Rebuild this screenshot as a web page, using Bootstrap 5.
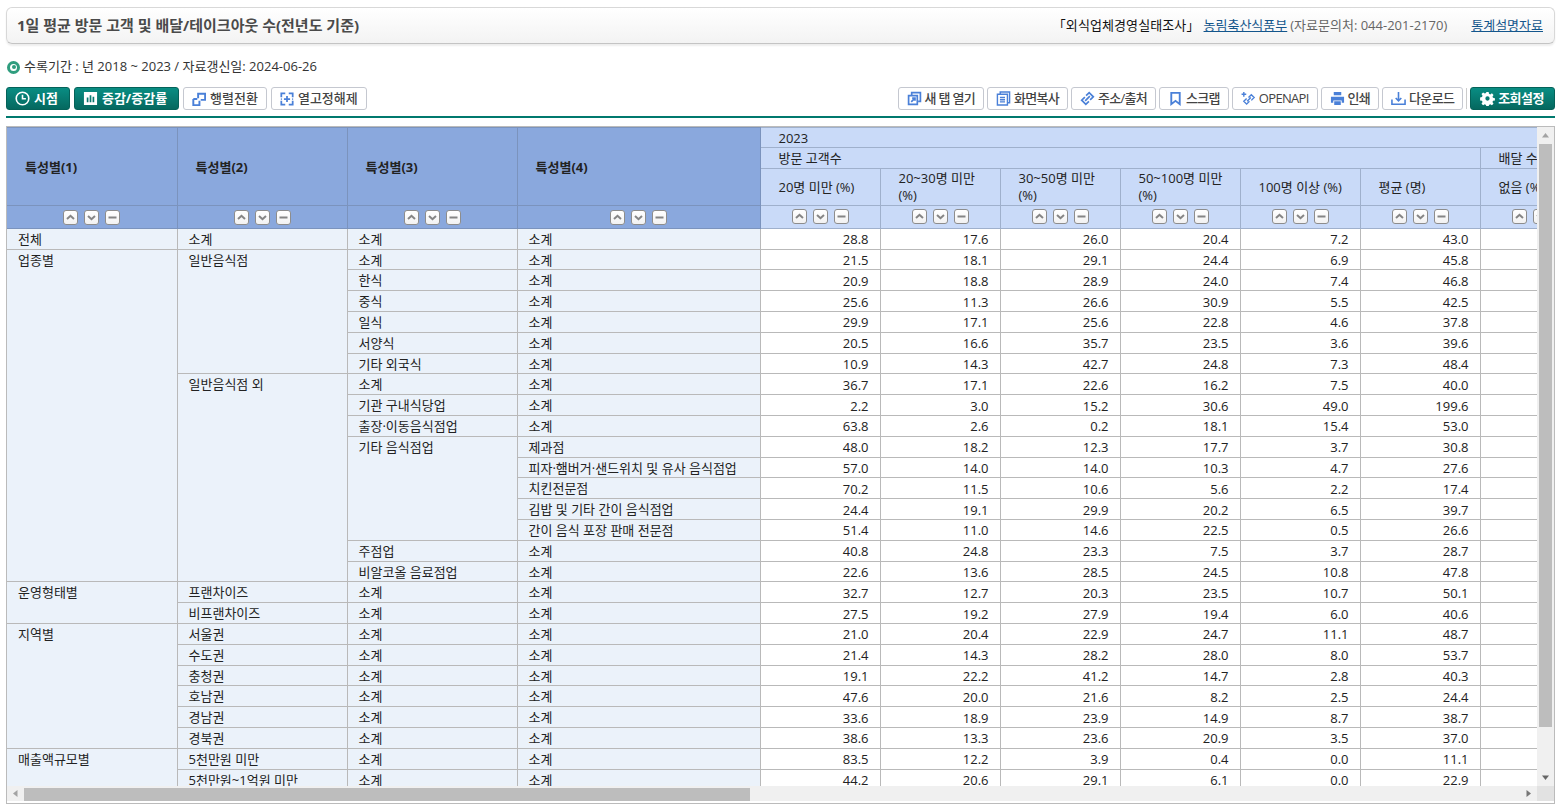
<!DOCTYPE html>
<html lang="ko">
<head>
<meta charset="utf-8">
<title>1일 평균 방문 고객 및 배달/테이크아웃 수</title>
<link href="https://cdn.jsdelivr.net/npm/bootstrap@5.3.0/dist/css/bootstrap.min.css" rel="stylesheet">
<style>
html,body{height:811px;overflow:hidden;background:#fff}
body{font-family:"Open Sans","Noto Sans CJK KR",sans-serif;font-size:13px;color:#333;padding:7px 8px 0 6px}
.title-panel{height:37px;border:1px solid #d8d8d8;border-bottom-color:#c4c4c4;border-radius:6px;background:linear-gradient(#fff,#f3f3f3);box-shadow:0 2px 2px #eee;padding:0 11px 0 10px}
.title-text{font-size:15px;font-weight:700;color:#4a4a4a;margin:0 0 1px}
.src-name{color:#111;font-size:13px;letter-spacing:.1px}
.src-link{color:#14568c}
.src-note{color:#666;font-size:13px}
.period{height:22px;margin-top:12px;color:#333}
.dot{width:13px;height:13px;border-radius:50%;border:3px solid #2f9d7e;background:#fff;position:relative;margin:0 4px 0 1px}
.dot::after{content:"";position:absolute;inset:1.5px;border-radius:50%;background:#2f9d7e}
.bar{margin-top:9px;height:31px;border-bottom:2px solid #00796e;padding-bottom:6px}
.tbtn{height:23px;padding:0 8px;font-size:13px;line-height:21px;border:1px solid #c5c8d0;border-radius:3px;background:#fff;color:#444;font-weight:500;display:flex;align-items:center;gap:4px;white-space:nowrap}
.tbtn svg{width:14px;height:14px;flex:none;color:#4a80d8}
.tbtn.on{background:linear-gradient(#098d83,#05685f);border-color:#056259;color:#fff;font-weight:700;padding:0 11px 0 8px}
.tbtn.on svg{color:#fff;width:15px;height:15px}
.rgroup{gap:3px}
.rgroup .tbtn{letter-spacing:-.7px;gap:3px}
.rgroup .tbtn svg{width:15px;height:15px}
.rgroup .tbtn.on{letter-spacing:-.5px;padding:0 10px 0 9px;gap:3px}
.vsep{width:1px;height:21px;background:#ccc}
.grid-frame{margin-top:8px;height:678px;border:1px solid #bbb;padding-bottom:2px}
.grid-body{height:659px}
.view{overflow:hidden}
.stat-grid.table{width:1713px;table-layout:fixed;border-collapse:collapse;margin:0;--bs-table-bg:#fff;color:#222}
.stat-grid.table>:not(caption)>*>*{padding:1px 12px 0 11px;height:20.8px;line-height:18px;border:1px solid #b9b9b9;font-size:13px;font-weight:400;vertical-align:middle;box-shadow:none;white-space:nowrap;overflow:hidden}
.stat-grid.table>:first-child>*:first-child>*{border-top:0}
.stat-grid.table>*>*>*:first-child{border-left:0}
.stat-grid.table>tbody>tr>th{background:#ebf2fa;text-align:left;vertical-align:top;color:#222;padding-top:2px;line-height:17px}
.stat-grid.table>tbody>tr>td{text-align:right;background:#fff;padding:2px 11px 0 0;line-height:17px}
.stat-grid.table>thead>tr>.dim{background:#8aa8dd;border-color:#7b93bd;font-weight:700;padding-left:18px;color:#222}
.stat-grid.table>thead>tr>.hd{background:#c9daf8;border-color:#9fb0cc;padding-left:18px;color:#222;white-space:normal;line-height:17px}
.stat-grid.table>thead>tr>.sorts{padding:0;text-align:center}
.stat-grid.table>thead>tr.r-year>*{height:20px}
.stat-grid.table>thead>tr.r-col>*{height:37px}
.stat-grid.table>thead>tr.r-sort>*{height:23px}
.sorts span{display:inline-block;width:15px;height:15px;border:1px solid #8d8d8d;border-radius:3px;background:linear-gradient(#fff,#f2f2f2);margin:0 3px;vertical-align:middle;position:relative;top:-1px}
.sorts svg{display:block;width:13px;height:13px;color:#858585}
.vbar{width:17px;background:#f0f0f0;color:#a3a3a3}
.vthumb{width:13px;margin:0 2px;background:#bdbdbd}
.hbar{height:15px;background:#f0f0f0;color:#777}
.hthumb{width:726px;height:13px;margin-top:2px;background:#bdbdbd}
.corner{width:17px;background:#e2e2e2}
.arr{flex:none;display:block}
</style>
</head>
<body>
<svg width="0" height="0" class="position-absolute">
<symbol id="up" viewBox="0 0 13 13"><path d="M3 8 6.500 4.800 10 8" fill="none" stroke="currentColor" stroke-width="2"/></symbol>
<symbol id="dn" viewBox="0 0 13 13"><path d="M3 5 6.500 8.200 10 5" fill="none" stroke="currentColor" stroke-width="2"/></symbol>
<symbol id="mn" viewBox="0 0 13 13"><path d="M2.500 6.500h8" fill="none" stroke="currentColor" stroke-width="2"/></symbol>
</svg>

<header class="title-panel d-flex align-items-center justify-content-between">
  <h1 class="title-text">1일 평균 방문 고객 및 배달/테이크아웃 수(전년도 기준)</h1>
  <div class="d-flex align-items-center">
    <span class="src-name">「외식업체경영실태조사」</span>
    <a href="#" class="src-link ms-1">농림축산식품부 </a>
    <span class="src-note" style="margin-left:3px">(자료문의처: 044-201-2170)</span>
    <a href="#" class="src-link" style="margin-left:24px">통계설명자료</a>
  </div>
</header>

<div class="period d-flex align-items-center"><i class="dot"></i><span>수록기간 : 년 2018 ~ 2023 / 자료갱신일: 2024-06-26</span></div>

<div class="bar d-flex justify-content-between">
  <div class="d-flex gap-1">
    <button class="tbtn on"><svg viewBox="0 0 16 16"><circle cx="8" cy="8" r="6.700" fill="none" stroke="currentColor" stroke-width="1.700"/><path d="M8 4v4.300h3.600" fill="none" stroke="currentColor" stroke-width="1.700"/></svg> 시점</button>
    <button class="tbtn on"><svg viewBox="0 0 16 16"><path fill="currentColor" fill-rule="evenodd" d="M1 1h14v14H1zM4 7v5h1.800V7zm3.100-2.500V12h1.800V4.500zM10.200 6v6H12V6z"/></svg> 증감/증감률</button>
    <button class="tbtn"><svg viewBox="0 0 16 16"><path fill="none" stroke="currentColor" stroke-width="2.200" d="M7 7V2h8v7h-5M1.500 8v7h7v-5M1.500 8H6"/></svg> 행렬전환</button>
    <button class="tbtn"><svg viewBox="0 0 16 16"><path fill="none" stroke="currentColor" stroke-width="2" d="M6 1.500H1.500V6M10 1.500h4.500V6M6 14.500H1.500V10M10 14.500h4.500V10M1 8h1M14 8h1M8 4.500v7M4.500 8h7"/></svg> 열고정해제</button>
  </div>
  <div class="d-flex rgroup align-items-center">
    <button class="tbtn"><svg viewBox="0 0 16 16"><path fill="none" stroke="currentColor" stroke-width="1.800" d="M5 4V1.700h9.300V11H12M1.700 5h9.300v9.300H1.700zM4.500 11.500 8.500 7.500M5.500 7.500h3v3"/></svg> 새 탭 열기</button>
    <button class="tbtn"><svg viewBox="0 0 16 16"><path fill="none" stroke="currentColor" stroke-width="1.500" d="M4.500 3.200V1h10v11.500h-2.300M1.500 3.500h10.700V15H1.500zM4.200 7h5.400M4.200 9.300h5.400M4.200 11.600h5.400"/></svg> 화면복사</button>
    <button class="tbtn"><svg viewBox="0 0 16 16"><path fill="none" stroke="currentColor" stroke-width="1.800" d="M6.500 5 9.800 1.800l4.400 4.400-3.400 3.300M9.500 11 6.200 14.200 1.800 9.800l3.400-3.300M5.500 10.500l5-5"/></svg> 주소/출처</button>
    <button class="tbtn"><svg viewBox="0 0 16 16"><path fill="none" stroke="currentColor" stroke-width="2" d="M3.500 2h9v12L8 10.500 3.500 14z"/></svg> 스크랩</button>
    <button class="tbtn"><svg viewBox="0 0 16 16"><path fill="none" stroke="currentColor" stroke-width="1.500" d="M8 7l3-3 3 3-3 3M9 11l-3 3-3-3 3-3M6.500 11 10.500 7M3 1v5M.6 3.500h5"/></svg> OPENAPI</button>
    <button class="tbtn"><svg viewBox="0 0 16 16"><path fill="currentColor" d="M4 1h8v3.500H4zM1 6h14v6.500h-2.500V10h-9v2.500H1zM4.500 11h7v4h-7z"/></svg> 인쇄</button>
    <button class="tbtn"><svg viewBox="0 0 16 16"><path fill="none" stroke="currentColor" stroke-width="1.700" d="M1 9v5.200h14V9M8 1v9M5 7.500l3 3 3-3"/></svg> 다운로드</button>
    <span class="vsep"></span>
    <button class="tbtn on"><svg viewBox="0 0 16 16"><path fill="currentColor" fill-rule="evenodd" d="M6.800 1h2.400l.4 2 1.300.6 1.800-1.100 1.700 1.700-1.100 1.800.6 1.300 2 .4v2.400l-2 .4-.6 1.300 1.100 1.800-1.700 1.700-1.800-1.100-1.300.6-.4 2H6.800l-.4-2-1.300-.6-1.800 1.100-1.700-1.700 1.100-1.800-.6-1.300-2-.4V6.800l2-.4.6-1.300-1.100-1.800 1.700-1.700 1.800 1.100 1.300-.6zM8 5.700a2.300 2.300 0 1 0 0 4.600 2.300 2.300 0 0 0 0-4.600z"/></svg> 조회설정</button>
  </div>
</div>

<section class="grid-frame">
  <div class="grid-body d-flex">
    <div class="view flex-grow-1">
      <table class="table stat-grid">
        <colgroup><col style="width:170px"><col style="width:170px"><col style="width:170px"><col style="width:243px"><col style="width:120px"><col style="width:120px"><col style="width:120px"><col style="width:120px"><col style="width:120px"><col style="width:120px"><col style="width:120px"><col style="width:120px"></colgroup>
        <thead>
          <tr class="r-year"><th class="dim" rowspan="3">특성별(1)</th><th class="dim" rowspan="3">특성별(2)</th><th class="dim" rowspan="3">특성별(3)</th><th class="dim" rowspan="3">특성별(4)</th><th class="hd" colspan="8">2023</th></tr>
          <tr><th class="hd" colspan="6">방문 고객수</th><th class="hd" colspan="2">배달 수</th></tr>
          <tr class="r-col"><th class="hd">20명 미만 (%)</th><th class="hd">20~30명 미만 (%)</th><th class="hd">30~50명 미만 (%)</th><th class="hd">50~100명 미만 (%)</th><th class="hd">100명 이상 (%)</th><th class="hd">평균 (명)</th><th class="hd">없음 (%)</th><th class="hd"></th></tr>
          <tr class="r-sort">
            <th class="dim sorts"><span><svg><use href="#up"/></svg></span><span><svg><use href="#dn"/></svg></span><span><svg><use href="#mn"/></svg></span></th>
            <th class="dim sorts"><span><svg><use href="#up"/></svg></span><span><svg><use href="#dn"/></svg></span><span><svg><use href="#mn"/></svg></span></th>
            <th class="dim sorts"><span><svg><use href="#up"/></svg></span><span><svg><use href="#dn"/></svg></span><span><svg><use href="#mn"/></svg></span></th>
            <th class="dim sorts"><span><svg><use href="#up"/></svg></span><span><svg><use href="#dn"/></svg></span><span><svg><use href="#mn"/></svg></span></th>
            <th class="hd sorts"><span><svg><use href="#up"/></svg></span><span><svg><use href="#dn"/></svg></span><span><svg><use href="#mn"/></svg></span></th>
            <th class="hd sorts"><span><svg><use href="#up"/></svg></span><span><svg><use href="#dn"/></svg></span><span><svg><use href="#mn"/></svg></span></th>
            <th class="hd sorts"><span><svg><use href="#up"/></svg></span><span><svg><use href="#dn"/></svg></span><span><svg><use href="#mn"/></svg></span></th>
            <th class="hd sorts"><span><svg><use href="#up"/></svg></span><span><svg><use href="#dn"/></svg></span><span><svg><use href="#mn"/></svg></span></th>
            <th class="hd sorts"><span><svg><use href="#up"/></svg></span><span><svg><use href="#dn"/></svg></span><span><svg><use href="#mn"/></svg></span></th>
            <th class="hd sorts"><span><svg><use href="#up"/></svg></span><span><svg><use href="#dn"/></svg></span><span><svg><use href="#mn"/></svg></span></th>
            <th class="hd sorts"><span><svg><use href="#up"/></svg></span><span><svg><use href="#dn"/></svg></span><span><svg><use href="#mn"/></svg></span></th>
            <th class="hd sorts"><span><svg><use href="#up"/></svg></span><span><svg><use href="#dn"/></svg></span><span><svg><use href="#mn"/></svg></span></th>
          </tr>
        </thead>
        <tbody>
          <tr><th>전체</th><th>소계</th><th>소계</th><th>소계</th><td>28.8</td><td>17.6</td><td>26.0</td><td>20.4</td><td>7.2</td><td>43.0</td><td></td><td></td></tr>
          <tr><th rowspan="16">업종별</th><th rowspan="6">일반음식점</th><th>소계</th><th>소계</th><td>21.5</td><td>18.1</td><td>29.1</td><td>24.4</td><td>6.9</td><td>45.8</td><td></td><td></td></tr>
          <tr><th>한식</th><th>소계</th><td>20.9</td><td>18.8</td><td>28.9</td><td>24.0</td><td>7.4</td><td>46.8</td><td></td><td></td></tr>
          <tr><th>중식</th><th>소계</th><td>25.6</td><td>11.3</td><td>26.6</td><td>30.9</td><td>5.5</td><td>42.5</td><td></td><td></td></tr>
          <tr><th>일식</th><th>소계</th><td>29.9</td><td>17.1</td><td>25.6</td><td>22.8</td><td>4.6</td><td>37.8</td><td></td><td></td></tr>
          <tr><th>서양식</th><th>소계</th><td>20.5</td><td>16.6</td><td>35.7</td><td>23.5</td><td>3.6</td><td>39.6</td><td></td><td></td></tr>
          <tr><th>기타 외국식</th><th>소계</th><td>10.9</td><td>14.3</td><td>42.7</td><td>24.8</td><td>7.3</td><td>48.4</td><td></td><td></td></tr>
          <tr><th rowspan="10">일반음식점 외</th><th>소계</th><th>소계</th><td>36.7</td><td>17.1</td><td>22.6</td><td>16.2</td><td>7.5</td><td>40.0</td><td></td><td></td></tr>
          <tr><th>기관 구내식당업</th><th>소계</th><td>2.2</td><td>3.0</td><td>15.2</td><td>30.6</td><td>49.0</td><td>199.6</td><td></td><td></td></tr>
          <tr><th>출장·이동음식점업</th><th>소계</th><td>63.8</td><td>2.6</td><td>0.2</td><td>18.1</td><td>15.4</td><td>53.0</td><td></td><td></td></tr>
          <tr><th rowspan="5">기타 음식점업</th><th>제과점</th><td>48.0</td><td>18.2</td><td>12.3</td><td>17.7</td><td>3.7</td><td>30.8</td><td></td><td></td></tr>
          <tr><th>피자·햄버거·샌드위치 및 유사 음식점업</th><td>57.0</td><td>14.0</td><td>14.0</td><td>10.3</td><td>4.7</td><td>27.6</td><td></td><td></td></tr>
          <tr><th>치킨전문점</th><td>70.2</td><td>11.5</td><td>10.6</td><td>5.6</td><td>2.2</td><td>17.4</td><td></td><td></td></tr>
          <tr><th>김밥 및 기타 간이 음식점업</th><td>24.4</td><td>19.1</td><td>29.9</td><td>20.2</td><td>6.5</td><td>39.7</td><td></td><td></td></tr>
          <tr><th>간이 음식 포장 판매 전문점</th><td>51.4</td><td>11.0</td><td>14.6</td><td>22.5</td><td>0.5</td><td>26.6</td><td></td><td></td></tr>
          <tr><th>주점업</th><th>소계</th><td>40.8</td><td>24.8</td><td>23.3</td><td>7.5</td><td>3.7</td><td>28.7</td><td></td><td></td></tr>
          <tr><th>비알코올 음료점업</th><th>소계</th><td>22.6</td><td>13.6</td><td>28.5</td><td>24.5</td><td>10.8</td><td>47.8</td><td></td><td></td></tr>
          <tr><th rowspan="2">운영형태별</th><th>프랜차이즈</th><th>소계</th><th>소계</th><td>32.7</td><td>12.7</td><td>20.3</td><td>23.5</td><td>10.7</td><td>50.1</td><td></td><td></td></tr>
          <tr><th>비프랜차이즈</th><th>소계</th><th>소계</th><td>27.5</td><td>19.2</td><td>27.9</td><td>19.4</td><td>6.0</td><td>40.6</td><td></td><td></td></tr>
          <tr><th rowspan="6">지역별</th><th>서울권</th><th>소계</th><th>소계</th><td>21.0</td><td>20.4</td><td>22.9</td><td>24.7</td><td>11.1</td><td>48.7</td><td></td><td></td></tr>
          <tr><th>수도권</th><th>소계</th><th>소계</th><td>21.4</td><td>14.3</td><td>28.2</td><td>28.0</td><td>8.0</td><td>53.7</td><td></td><td></td></tr>
          <tr><th>충청권</th><th>소계</th><th>소계</th><td>19.1</td><td>22.2</td><td>41.2</td><td>14.7</td><td>2.8</td><td>40.3</td><td></td><td></td></tr>
          <tr><th>호남권</th><th>소계</th><th>소계</th><td>47.6</td><td>20.0</td><td>21.6</td><td>8.2</td><td>2.5</td><td>24.4</td><td></td><td></td></tr>
          <tr><th>경남권</th><th>소계</th><th>소계</th><td>33.6</td><td>18.9</td><td>23.9</td><td>14.9</td><td>8.7</td><td>38.7</td><td></td><td></td></tr>
          <tr><th>경북권</th><th>소계</th><th>소계</th><td>38.6</td><td>13.3</td><td>23.6</td><td>20.9</td><td>3.5</td><td>37.0</td><td></td><td></td></tr>
          <tr><th rowspan="2">매출액규모별</th><th>5천만원 미만</th><th>소계</th><th>소계</th><td>83.5</td><td>12.2</td><td>3.9</td><td>0.4</td><td>0.0</td><td>11.1</td><td></td><td></td></tr>
          <tr><th>5천만원~1억원 미만</th><th>소계</th><th>소계</th><td>44.2</td><td>20.6</td><td>29.1</td><td>6.1</td><td>0.0</td><td>22.9</td><td></td><td></td></tr>
        </tbody>
      </table>
    </div>
    <div class="vbar d-flex flex-column align-items-center">
      <svg class="arr" width="17" height="17" viewBox="0 0 17 17"><path d="M8.500 6 12 10.500H5z" fill="currentColor"/></svg>
      <div class="vthumb" style="height:583px"></div>
      <div class="flex-grow-1"></div>
      <svg class="arr" width="17" height="17" viewBox="0 0 17 17"><path d="M8.500 11 12 6.500H5z" fill="#666"/></svg>
    </div>
  </div>
  <div class="d-flex hbar">
    <svg class="arr" width="17" height="15" viewBox="0 0 17 15"><path d="M6 7.500 10.500 4v7z" fill="#a3a3a3"/></svg>
    <div class="hthumb"></div>
    <div class="flex-grow-1"></div>
    <svg class="arr" width="17" height="15" viewBox="0 0 17 15"><path d="M11 7.500 6.500 4v7z" fill="currentColor"/></svg>
    <div class="corner"></div>
  </div>
</section>
</body>
</html>
